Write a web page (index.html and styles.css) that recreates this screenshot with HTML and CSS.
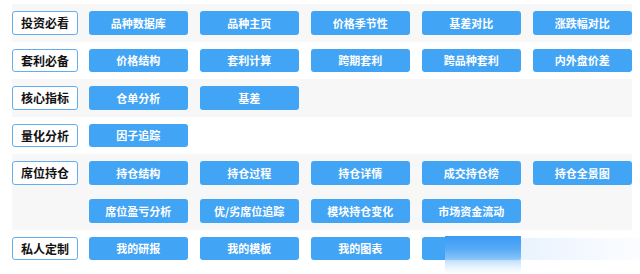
FILE: index.html
```html
<!DOCTYPE html>
<html lang="zh-CN">
<head>
<meta charset="utf-8">
<link rel="stylesheet" href="styles.css">
</head>
<body>
<div class="board">
  <div class="row alt">
    <div class="label">投资必看</div>
    <div class="btns">
      <div class="btn">品种数据库</div>
      <div class="btn">品种主页</div>
      <div class="btn">价格季节性</div>
      <div class="btn">基差对比</div>
      <div class="btn">涨跌幅对比</div>
    </div>
  </div>
  <div class="row">
    <div class="label">套利必备</div>
    <div class="btns">
      <div class="btn">价格结构</div>
      <div class="btn">套利计算</div>
      <div class="btn">跨期套利</div>
      <div class="btn">跨品种套利</div>
      <div class="btn">内外盘价差</div>
    </div>
  </div>
  <div class="row alt">
    <div class="label">核心指标</div>
    <div class="btns">
      <div class="btn">仓单分析</div>
      <div class="btn">基差</div>
    </div>
  </div>
  <div class="row">
    <div class="label">量化分析</div>
    <div class="btns">
      <div class="btn">因子追踪</div>
    </div>
  </div>
  <div class="row alt">
    <div class="label">席位持仓</div>
    <div class="btns">
      <div class="btn">持仓结构</div>
      <div class="btn">持仓过程</div>
      <div class="btn">持仓详情</div>
      <div class="btn">成交持仓榜</div>
      <div class="btn">持仓全景图</div>
      <div class="btn">席位盈亏分析</div>
      <div class="btn">优/劣席位追踪</div>
      <div class="btn">模块持仓变化</div>
      <div class="btn">市场资金流动</div>
    </div>
  </div>
  <div class="row">
    <div class="label">私人定制</div>
    <div class="btns">
      <div class="btn">我的研报</div>
      <div class="btn">我的模板</div>
      <div class="btn">我的图表</div>
      <div class="btn blank"></div>
    </div>
  </div>
</div>
<div class="smudge"></div>
<div class="smudge-tail"></div>
</body>
</html>
```
FILE: styles.css
```css
html, body {
  margin: 0;
  padding: 0;
  background: #ffffff;
  width: 640px;
  height: 274px;
  overflow: hidden;
  font-family: "Microsoft YaHei", "Noto Sans CJK SC", "Noto Sans", sans-serif;
}

.board {
  margin: 4px 0 0 12px;
  width: 620px;
  display: flex;
  flex-direction: column;
}

.row {
  display: flex;
  align-items: flex-start;
  padding: 7px 0;
  box-sizing: border-box;
}

.row.alt {
  background: #f7f7f7;
}

.label {
  flex: 0 0 66px;
  height: 23.5px;
  box-sizing: border-box;
  border: 1px solid #62aef0;
  border-radius: 3px;
  background: #ffffff;
  color: #111111;
  font-size: 12px;
  font-weight: 700;
  display: flex;
  align-items: center;
  justify-content: center;
  letter-spacing: 0;
}

.btns {
  margin-left: 10.5px;
  display: grid;
  grid-template-columns: repeat(5, 99.5px);
  column-gap: 11.5px;
  row-gap: 14.5px;
}

.btn {
  height: 23.5px;
  background: #42a4f4;
  border-radius: 3px;
  color: #ffffff;
  font-size: 11px;
  font-weight: 700;
  display: flex;
  align-items: center;
  justify-content: center;
}

.smudge {
  position: absolute;
  left: 445px;
  top: 236px;
  width: 76px;
  height: 38px;
  background: linear-gradient(to bottom,
    rgba(58, 155, 245, 1) 0%,
    rgba(90, 172, 246, 0.9) 35%,
    rgba(160, 206, 250, 0.75) 60%,
    rgba(225, 240, 254, 0.9) 80%,
    rgba(255, 255, 255, 1) 100%);
}

.smudge-tail {
  position: absolute;
  left: 521px;
  top: 238px;
  width: 119px;
  height: 22px;
  background: linear-gradient(to right, #e9f3fe 0%, #f3f8ff 50%, #fcfdff 100%);
}
```
